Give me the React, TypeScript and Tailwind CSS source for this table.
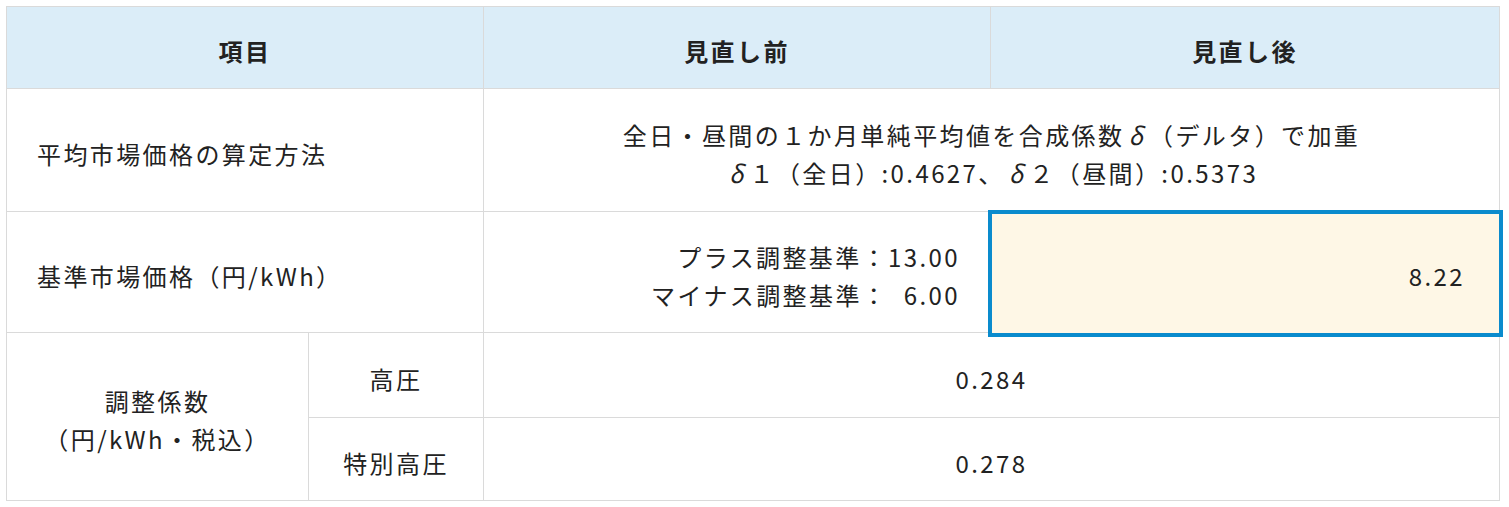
import React from 'react';

const cell = 'border-r border-b border-[#dadada] flex items-center pt-[7px]';

// greek delta set wide and slanted, as in the source page
const Delta: React.FC = () => <span className="mx-[4px] italic">δ</span>;

const App: React.FC = () => {
  return (
    <div className="min-h-screen bg-white p-[6px] font-['Noto_Sans_CJK_JP','Noto_Sans',sans-serif] text-[24px] leading-[38px] tracking-[0.1em] text-[#222]">
      <div className="grid w-[1494px] grid-cols-[302px_175px_507px_509px] grid-rows-[82px_123px_121px_85px_83px] border-l border-t border-[#dadada]">
        {/* Header */}
        <div className={`${cell} col-span-2 justify-center bg-[#dbedf8] font-bold`}>項目</div>
        <div className={`${cell} justify-center bg-[#dbedf8] font-bold`}>見直し前</div>
        <div className={`${cell} justify-center bg-[#dbedf8] font-bold`}>見直し後</div>

        {/* 平均市場価格 */}
        <div className={`${cell} col-span-2 pl-[30px]`}>平均市場価格の算定方法</div>
        <div className={`${cell} col-span-2 flex-col justify-center text-center`}>
          <p>全日・昼間の１か月単純平均値を合成係数<Delta />（デルタ）で加重</p>
          <p><Delta />１（全日）:0.4627、<Delta />２（昼間）:0.5373</p>
        </div>

        {/* 基準市場価格 */}
        <div className={`${cell} col-span-2 pl-[30px]`}>基準市場価格（円/kWh）</div>
        <div className={`${cell} flex-col items-end justify-center pr-[30px] text-right`}>
          <p>プラス調整基準：13.00</p>
          <p>マイナス調整基準：&nbsp;&nbsp;6.00</p>
        </div>
        <div className={`${cell} relative justify-end pr-[34px]`}>
          <div className="pointer-events-none absolute -top-[2px] -bottom-[5px] -left-[3px] -right-[4px] border-4 border-[#0a8bcd] bg-[#fef7e6]" />
          <span className="relative">8.22</span>
        </div>

        {/* 調整係数 */}
        <div className={`${cell} row-span-2 flex-col justify-center text-center`}>
          <p>調整係数</p>
          <p>（円/kWh・税込）</p>
        </div>
        <div className={`${cell} justify-center`}>高圧</div>
        <div className={`${cell} col-span-2 justify-center`}>0.284</div>
        <div className={`${cell} justify-center`}>特別高圧</div>
        <div className={`${cell} col-span-2 justify-center`}>0.278</div>
      </div>
    </div>
  );
};

export default App;
